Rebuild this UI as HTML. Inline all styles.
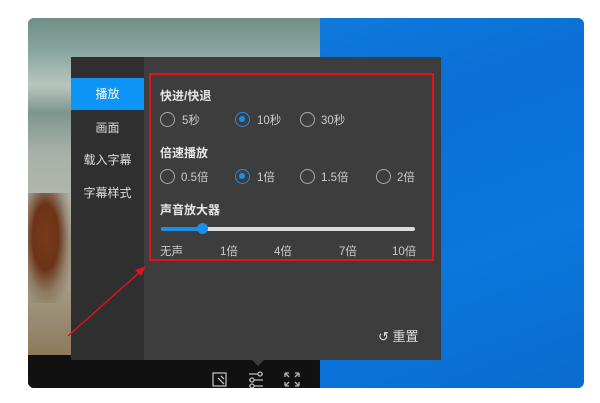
<!DOCTYPE html>
<html><head><meta charset="utf-8"><style>
*{margin:0;padding:0;box-sizing:border-box}
body{width:600px;height:403px;background:#fff;position:relative;overflow:hidden;font-family:"Liberation Sans","Noto Sans CJK SC",sans-serif}
.card{position:absolute;left:28px;top:18px;width:556px;height:370px;border-radius:6px;overflow:hidden;background:linear-gradient(160deg,#1583e0 0%,#0a6fd6 40%,#0b76dc 70%,#0a6ccf 100%)}
.video{position:absolute;left:0;top:0;width:292px;height:337px;background:linear-gradient(180deg,#6f8f86 0%,#8aa59f 10%,#b9c6c0 20%,#7d958f 28%,#a7b1a9 40%,#b7b9b0 60%,#a49a86 80%,#8d7a5c 100%)}
.horse{position:absolute;left:0;top:175px;width:44px;height:110px;background:radial-gradient(ellipse at 40% 40%,#7a3a1c 0%,#6b3418 35%,rgba(110,80,50,0.4) 60%,rgba(100,60,30,0) 80%)}
.bar{position:absolute;left:0;top:337px;width:292px;height:33px;background:#111}
.panel{position:absolute;left:71px;top:57px;width:370px;height:303px;background:#3d3d3d}
.side{position:absolute;left:0;top:0;width:73px;height:303px;background:#2f2f2f}
.tab{position:absolute;left:0;width:73px;text-align:center;color:#ddd;font-size:12px}
.tab.on{background:#0c95f6;color:#fff;height:32px;line-height:32px;top:21px}
.t{position:absolute;color:#e6e6e6;font-size:12px;font-weight:bold;white-space:nowrap}
.l{position:absolute;color:#ccc;font-size:11.5px;white-space:nowrap}
.r{position:absolute;width:15px;height:15px;border:1.5px solid #aaa;border-radius:50%}
.r.on{border-color:#1a8fe6}
.r.on::after{content:"";position:absolute;left:3px;top:3px;width:6px;height:6px;border-radius:50%;background:#1a8fe6}
.red{position:absolute;left:149px;top:73px;width:285px;height:188px;border:2px solid #e0121c}
</style></head><body>
<div class="card">
 <div class="video"><div class="horse"></div></div>
 <div class="bar"></div>
 <svg style="position:absolute;left:183px;top:352px" width="120" height="18" viewBox="0 0 120 18" fill="none" stroke="#bbb" stroke-width="1.3">
  <rect x="2" y="3" width="13" height="13"/><path d="M7 8l6 6M10 6l3 3"/>
  <path d="M38 4h14M38 10h14M38 16h14"/><circle cx="49" cy="4" r="2" fill="#111"/><circle cx="41" cy="10" r="2" fill="#111"/><circle cx="41" cy="16" r="2" fill="#111"/>
  <path d="M74 3h4M74 3v4M88 3h-4M88 3v4M74 16h4M74 16v-4M88 16h-4M88 16v-4M75 4l3 3M87 4l-3 3M75 15l3-3M87 15l-3-3"/>
 </svg>
</div>
<div style="position:absolute;left:252px;top:360px;width:0;height:0;border-left:6px solid transparent;border-right:6px solid transparent;border-top:6px solid #3d3d3d"></div>
<div class="panel">
 <div class="side">
  <div class="tab on">播放</div>
  <div class="tab" style="top:62px">画面</div>
  <div class="tab" style="top:94px">载入字幕</div>
  <div class="tab" style="top:127px">字幕样式</div>
 </div>
</div>
<div class="t" style="left:160px;top:87px">快进/快退</div>
<div class="r" style="left:160px;top:112px"></div><div class="l" style="left:182px;top:112px">5秒</div>
<div class="r on" style="left:235px;top:112px"></div><div class="l" style="left:257px;top:112px">10秒</div>
<div class="r" style="left:300px;top:112px"></div><div class="l" style="left:321px;top:112px">30秒</div>
<div class="t" style="left:160px;top:144px">倍速播放</div>
<div class="r" style="left:160px;top:169px"></div><div class="l" style="left:181px;top:169px">0.5倍</div>
<div class="r on" style="left:235px;top:169px"></div><div class="l" style="left:257px;top:169px">1倍</div>
<div class="r" style="left:300px;top:169px"></div><div class="l" style="left:321px;top:169px">1.5倍</div>
<div class="r" style="left:376px;top:169px"></div><div class="l" style="left:397px;top:169px">2倍</div>
<div class="t" style="left:160px;top:201px">声音放大器</div>
<div style="position:absolute;left:161px;top:227px;width:254px;height:4px;border-radius:2px;background:#ddd"></div>
<div style="position:absolute;left:161px;top:227px;width:42px;height:4px;border-radius:2px;background:#1a8fe6"></div>
<div style="position:absolute;left:197px;top:223px;width:11px;height:11px;border-radius:50%;background:#1a8fe6"></div>
<div class="l" style="left:160px;top:243px">无声</div>
<div class="l" style="left:220px;top:243px">1倍</div>
<div class="l" style="left:274px;top:243px">4倍</div>
<div class="l" style="left:339px;top:243px">7倍</div>
<div class="l" style="left:392px;top:243px">10倍</div>
<div class="red"></div>
<div class="l" style="left:378px;top:326px;font-size:13px;color:#ddd">↺ 重置</div>
<svg style="position:absolute;left:0;top:0" width="600" height="403"><line x1="68" y1="336" x2="140" y2="272" stroke="#e0121c" stroke-width="1.5"/><path d="M146 266l-11 4 6 6z" fill="#e0121c"/></svg>
</body></html>
